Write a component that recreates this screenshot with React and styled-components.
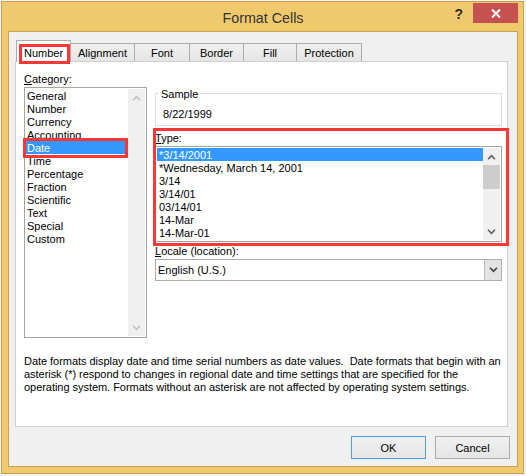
import React from 'react';
import styled, { createGlobalStyle } from 'styled-components';

const GlobalStyle = createGlobalStyle`
  html, body {
    margin: 0;
    padding: 0;
    background: #f4f4f4;
  }
  body {
    font-family: "Liberation Sans", Arial, sans-serif;
    font-size: 11px;
    color: #000;
  }
  #root {
    box-sizing: border-box;
    width: 526px;
    height: 476px;
    padding: 1px 0 0 1px;
    overflow: hidden;
  }
`;

const tabs = [
  { label: 'Number', width: 55, active: true },
  { label: 'Alignment', width: 65 },
  { label: 'Font', width: 56 },
  { label: 'Border', width: 55 },
  { label: 'Fill', width: 54 },
  { label: 'Protection', width: 66 },
];

const categories = [
  'General',
  'Number',
  'Currency',
  'Accounting',
  'Date',
  'Time',
  'Percentage',
  'Fraction',
  'Scientific',
  'Text',
  'Special',
  'Custom',
];

const dateTypes = [
  '*3/14/2001',
  '*Wednesday, March 14, 2001',
  '3/14',
  '3/14/01',
  '03/14/01',
  '14-Mar',
  '14-Mar-01',
];

function Chevron({ dir = 'down', color = '#606060' }) {
  return (
    <svg width="9" height="6" viewBox="0 0 9 6">
      <path
        d={dir === 'up' ? 'M1 5.2L4.5 1.6L8 5.2' : 'M1 0.8L4.5 4.4L8 0.8'}
        fill="none"
        stroke={color}
        strokeWidth="1.6"
      />
    </svg>
  );
}

function ScrollBar({ disabled, thumb }) {
  const color = disabled ? '#c2c2c2' : '#606060';
  return (
    <Scroll>
      <ScrollArrow>
        <Chevron dir="up" color={color} />
      </ScrollArrow>
      <ScrollTrack>{thumb && <ScrollThumb $height={thumb} />}</ScrollTrack>
      <ScrollArrow>
        <Chevron dir="down" color={color} />
      </ScrollArrow>
    </Scroll>
  );
}

export default function App() {
  return (
    <>
      <GlobalStyle />
      <Window>
        <TitleBar>
          <span />
          <Title>Format Cells</Title>
          <Controls>
            <HelpButton>?</HelpButton>
            <CloseButton>
              <svg width="10" height="9" viewBox="0 0 10 9">
                <path d="M1 0.5L9 8.5M9 0.5L1 8.5" stroke="#fff" strokeWidth="2" />
              </svg>
            </CloseButton>
          </Controls>
        </TitleBar>

        <Client>
          <TabRow>
            {tabs.map(tab => (
              <Tab key={tab.label} $active={tab.active} $width={tab.width}>
                {tab.label}
                {tab.active && <Marker $top={3} $right={0} $bottom={-2} $left={2} />}
              </Tab>
            ))}
          </TabRow>

          <Panel>
            <Columns>
              <div>
                <FieldLabel>
                  <u>C</u>ategory:
                </FieldLabel>
                <ListBox $height={251}>
                  <ListItems>
                    {categories.map(name => (
                      <ListItem key={name} $selected={name === 'Date'} $indent={1}>
                        {name}
                        {name === 'Date' && (
                          <Marker $top={-3} $right={0} $bottom={-4} $left={-3} />
                        )}
                      </ListItem>
                    ))}
                  </ListItems>
                  <ScrollBar disabled />
                </ListBox>
              </div>

              <RightColumn>
                <SampleBox>
                  <legend>Sample</legend>
                  <SampleValue>8/22/1999</SampleValue>
                </SampleBox>

                <TypeGroup>
                  <FieldLabel>
                    <u>T</u>ype:
                  </FieldLabel>
                  <ListBox $height={96}>
                    <ListItems>
                      {dateTypes.map((type, i) => (
                        <ListItem key={type} $selected={i === 0} $indent={2}>
                          {type}
                        </ListItem>
                      ))}
                    </ListItems>
                    <ScrollBar thumb={24} />
                  </ListBox>
                  <Marker $top={-3} $right={-7} $bottom={-4} $left={-2} />
                </TypeGroup>

                <FieldLabel $gap={2}>
                  <u>L</u>ocale (location):
                </FieldLabel>
                <Combo>
                  <ComboText>English (U.S.)</ComboText>
                  <ComboButton>
                    <Chevron dir="down" color="#404040" />
                  </ComboButton>
                </Combo>
              </RightColumn>
            </Columns>

            <Description>
              Date formats display date and time serial numbers as date values.{'\u00a0'} Date
              formats that begin with an
              <br />
              asterisk (*) respond to changes in regional date and time settings that are
              specified for the
              <br />
              operating system. Formats without an asterisk are not affected by operating
              system settings.
            </Description>
          </Panel>

          <ButtonRow>
            <DialogButton $default>OK</DialogButton>
            <DialogButton>Cancel</DialogButton>
          </ButtonRow>
        </Client>
      </Window>
    </>
  );
}

const Window = styled.div`
  box-sizing: border-box;
  width: 523px;
  height: 473px;
  border: 1px solid #c8a04e;
  background: #f1c96d;
  padding: 0 5px 6px 6px;
  display: flex;
  flex-direction: column;
`;

const TitleBar = styled.div`
  height: 29px;
  display: grid;
  grid-template-columns: 1fr auto 1fr;
  align-items: start;
`;

const Title = styled.div`
  padding-top: 8px;
  font-size: 14.3px;
  line-height: 17px;
  color: #333;
`;

const Controls = styled.div`
  justify-self: end;
  display: flex;
  align-items: flex-start;
  gap: 10px;
`;

const HelpButton = styled.div`
  margin-top: 4px;
  font-size: 14px;
  font-weight: bold;
  line-height: 17px;
  color: #2b2b2b;
`;

const CloseButton = styled.div`
  margin-top: 1px;
  width: 45px;
  height: 20px;
  background: #c75050;
  display: flex;
  align-items: center;
  justify-content: center;
`;

const Client = styled.div`
  flex: 1;
  border: 1px solid #c6a259;
  background: #f0f0f0;
  padding: 8px 9px 0 6px;
  display: flex;
  flex-direction: column;
`;

const TabRow = styled.div`
  height: 21px;
  padding-left: 1px;
  display: flex;
  align-items: flex-end;
`;

const Tab = styled.div`
  position: relative;
  z-index: ${p => (p.$active ? 1 : 0)};
  box-sizing: border-box;
  width: ${p => p.$width}px;
  height: ${p => (p.$active ? 22 : 18)}px;
  margin-left: -1px;
  margin-bottom: ${p => (p.$active ? -1 : 0)}px;
  padding-top: ${p => (p.$active ? 6 : 3)}px;
  border: 1px solid #acacac;
  border-bottom: none;
  background: ${p => (p.$active ? '#fff' : 'linear-gradient(#f0f0f0, #e5e5e5)')};
  text-align: center;
  line-height: 13px;
  white-space: nowrap;

  &:first-child {
    margin-left: 0;
  }
`;

const Marker = styled.div`
  position: absolute;
  top: ${p => p.$top}px;
  right: ${p => p.$right}px;
  bottom: ${p => p.$bottom}px;
  left: ${p => p.$left}px;
  border: 3px solid #ff3636;
  pointer-events: none;
  z-index: 2;
`;

const Panel = styled.div`
  box-sizing: border-box;
  height: 366px;
  border: 1px solid #d0d0d0;
  background: #fff;
  padding: 10px 5px 0 8px;
`;

const Columns = styled.div`
  display: grid;
  grid-template-columns: 123px 1fr;
  column-gap: 8px;
  align-items: start;
`;

const RightColumn = styled.div`
  padding-top: 15px;
  display: flex;
  flex-direction: column;
`;

const FieldLabel = styled.div`
  height: 13px;
  margin-top: ${p => p.$gap || 0}px;
  margin-bottom: 2px;
  line-height: 15px;

  u {
    text-decoration: underline;
    text-underline-offset: 1px;
  }
`;

const ListBox = styled.div`
  box-sizing: border-box;
  height: ${p => p.$height}px;
  border: 1px solid #a5a5a5;
  background: #fff;
  padding: 1px;
  display: flex;
`;

const ListItems = styled.div`
  flex: 1;
  min-width: 0;
`;

const ListItem = styled.div`
  position: relative;
  height: 13px;
  line-height: 15px;
  padding-left: ${p => p.$indent}px;
  white-space: nowrap;
  background: ${p => (p.$selected ? '#3399ff' : 'transparent')};
  color: ${p => (p.$selected ? '#fff' : '#000')};
`;

const Scroll = styled.div`
  width: 17px;
  background: #f0f0f0;
  display: flex;
  flex-direction: column;
`;

const ScrollArrow = styled.div`
  height: 17px;
  display: flex;
  align-items: center;
  justify-content: center;
`;

const ScrollTrack = styled.div`
  flex: 1;
`;

const ScrollThumb = styled.div`
  height: ${p => p.$height}px;
  background: #cdcdcd;
`;

const SampleBox = styled.fieldset`
  margin: 0;
  min-width: 0;
  padding: 7px 7px 5px;
  border: 1px solid #dcdcdc;

  legend {
    margin-left: -4px;
    padding: 0 2px;
    height: 13px;
    line-height: 15px;
  }
`;

const SampleValue = styled.div`
  height: 13px;
  line-height: 15px;
`;

const TypeGroup = styled.div`
  position: relative;
  margin-top: 5px;
`;

const Combo = styled.div`
  box-sizing: border-box;
  height: 22px;
  border: 1px solid #acacac;
  background: #fff;
  display: flex;
`;

const ComboText = styled.div`
  flex: 1;
  padding-left: 2px;
  line-height: 21px;
`;

const ComboButton = styled.div`
  width: 16px;
  background: #e3e3e3;
  border-left: 1px solid #bdbdbd;
  display: flex;
  align-items: center;
  justify-content: center;
`;

const Description = styled.p`
  margin: 16px 0 0;
  padding-top: 1px;
  line-height: 13px;
  letter-spacing: -0.04px;
  white-space: nowrap;
`;

const ButtonRow = styled.div`
  margin: 9px -2px 0 0;
  display: flex;
  justify-content: flex-end;
  gap: 9px;
`;

const DialogButton = styled.button`
  box-sizing: border-box;
  width: 75px;
  height: 23px;
  padding: 0;
  font-family: inherit;
  font-size: 11px;
  color: #000;
  border: 1px solid ${p => (p.$default ? '#4d9de8' : '#acacac')};
  background: linear-gradient(#f0f0f0, #e5e5e5);
`;
